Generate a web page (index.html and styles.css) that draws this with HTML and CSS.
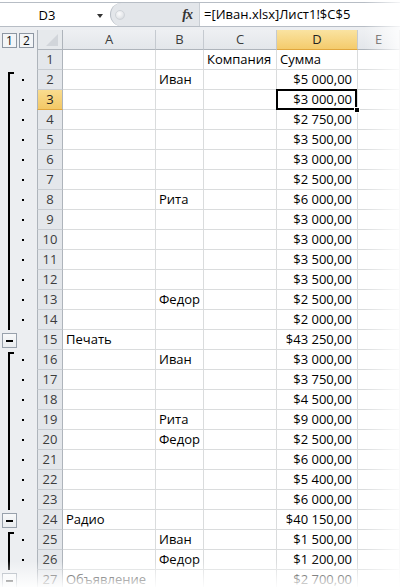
FILE: index.html
```html
<!DOCTYPE html>
<html lang="ru">
<head>
<meta charset="utf-8">
<title>Лист1</title>
<link rel="stylesheet" href="styles.css">
</head>
<body>
<div class="app">
  <div class="fbar">
    <div class="namebox"><span class="ref">D3</span><span class="arrow"></span></div>
    <div class="fx-area"><span class="grip"></span><span class="fx">fx</span></div>
    <div class="formula">=[Иван.xlsx]Лист1!$C$5</div>
  </div>
  <div class="gap"></div>

  <div class="sheet">
    <div class="row head">
      <div class="ol levels"><span class="lvl">1</span><span class="lvl">2</span></div>
      <div class="corner"><span class="tri"></span></div>
      <div class="ch">A</div>
      <div class="ch">B</div>
      <div class="ch">C</div>
      <div class="ch on">D</div>
      <div class="ch">E</div>
    </div>

    <div class="row"><div class="ol"></div><div class="rh">1</div><div class="c"></div><div class="c"></div><div class="c">Компания</div><div class="c">Сумма</div><div class="c"></div></div>
    <div class="row"><div class="ol s"><i class="bar"></i><i class="dot"></i></div><div class="rh">2</div><div class="c"></div><div class="c">Иван</div><div class="c"></div><div class="c num">$5 000,00</div><div class="c"></div></div>
    <div class="row"><div class="ol"><i class="bar"></i><i class="dot"></i></div><div class="rh on">3</div><div class="c"></div><div class="c"></div><div class="c"></div><div class="c num sel">$3 000,00<i class="handle"></i></div><div class="c"></div></div>
    <div class="row"><div class="ol"><i class="bar"></i><i class="dot"></i></div><div class="rh">4</div><div class="c"></div><div class="c"></div><div class="c"></div><div class="c num">$2 750,00</div><div class="c"></div></div>
    <div class="row"><div class="ol"><i class="bar"></i><i class="dot"></i></div><div class="rh">5</div><div class="c"></div><div class="c"></div><div class="c"></div><div class="c num">$3 500,00</div><div class="c"></div></div>
    <div class="row"><div class="ol"><i class="bar"></i><i class="dot"></i></div><div class="rh">6</div><div class="c"></div><div class="c"></div><div class="c"></div><div class="c num">$3 000,00</div><div class="c"></div></div>
    <div class="row"><div class="ol"><i class="bar"></i><i class="dot"></i></div><div class="rh">7</div><div class="c"></div><div class="c"></div><div class="c"></div><div class="c num">$2 500,00</div><div class="c"></div></div>
    <div class="row"><div class="ol"><i class="bar"></i><i class="dot"></i></div><div class="rh">8</div><div class="c"></div><div class="c">Рита</div><div class="c"></div><div class="c num">$6 000,00</div><div class="c"></div></div>
    <div class="row"><div class="ol"><i class="bar"></i><i class="dot"></i></div><div class="rh">9</div><div class="c"></div><div class="c"></div><div class="c"></div><div class="c num">$3 000,00</div><div class="c"></div></div>
    <div class="row"><div class="ol"><i class="bar"></i><i class="dot"></i></div><div class="rh">10</div><div class="c"></div><div class="c"></div><div class="c"></div><div class="c num">$3 000,00</div><div class="c"></div></div>
    <div class="row"><div class="ol"><i class="bar"></i><i class="dot"></i></div><div class="rh">11</div><div class="c"></div><div class="c"></div><div class="c"></div><div class="c num">$3 500,00</div><div class="c"></div></div>
    <div class="row"><div class="ol"><i class="bar"></i><i class="dot"></i></div><div class="rh">12</div><div class="c"></div><div class="c"></div><div class="c"></div><div class="c num">$3 500,00</div><div class="c"></div></div>
    <div class="row"><div class="ol"><i class="bar"></i><i class="dot"></i></div><div class="rh">13</div><div class="c"></div><div class="c">Федор</div><div class="c"></div><div class="c num">$2 500,00</div><div class="c"></div></div>
    <div class="row"><div class="ol"><i class="bar"></i><i class="dot"></i></div><div class="rh">14</div><div class="c"></div><div class="c"></div><div class="c"></div><div class="c num">$2 000,00</div><div class="c"></div></div>
    <div class="row"><div class="ol sum"><i class="minus"></i></div><div class="rh">15</div><div class="c">Печать</div><div class="c"></div><div class="c"></div><div class="c num">$43 250,00</div><div class="c"></div></div>
    <div class="row"><div class="ol s"><i class="bar"></i><i class="dot"></i></div><div class="rh">16</div><div class="c"></div><div class="c">Иван</div><div class="c"></div><div class="c num">$3 000,00</div><div class="c"></div></div>
    <div class="row"><div class="ol"><i class="bar"></i><i class="dot"></i></div><div class="rh">17</div><div class="c"></div><div class="c"></div><div class="c"></div><div class="c num">$3 750,00</div><div class="c"></div></div>
    <div class="row"><div class="ol"><i class="bar"></i><i class="dot"></i></div><div class="rh">18</div><div class="c"></div><div class="c"></div><div class="c"></div><div class="c num">$4 500,00</div><div class="c"></div></div>
    <div class="row"><div class="ol"><i class="bar"></i><i class="dot"></i></div><div class="rh">19</div><div class="c"></div><div class="c">Рита</div><div class="c"></div><div class="c num">$9 000,00</div><div class="c"></div></div>
    <div class="row"><div class="ol"><i class="bar"></i><i class="dot"></i></div><div class="rh">20</div><div class="c"></div><div class="c">Федор</div><div class="c"></div><div class="c num">$2 500,00</div><div class="c"></div></div>
    <div class="row"><div class="ol"><i class="bar"></i><i class="dot"></i></div><div class="rh">21</div><div class="c"></div><div class="c"></div><div class="c"></div><div class="c num">$6 000,00</div><div class="c"></div></div>
    <div class="row"><div class="ol"><i class="bar"></i><i class="dot"></i></div><div class="rh">22</div><div class="c"></div><div class="c"></div><div class="c"></div><div class="c num">$5 400,00</div><div class="c"></div></div>
    <div class="row"><div class="ol"><i class="bar"></i><i class="dot"></i></div><div class="rh">23</div><div class="c"></div><div class="c"></div><div class="c"></div><div class="c num">$6 000,00</div><div class="c"></div></div>
    <div class="row"><div class="ol sum"><i class="minus"></i></div><div class="rh">24</div><div class="c">Радио</div><div class="c"></div><div class="c"></div><div class="c num">$40 150,00</div><div class="c"></div></div>
    <div class="row"><div class="ol s"><i class="bar"></i><i class="dot"></i></div><div class="rh">25</div><div class="c"></div><div class="c">Иван</div><div class="c"></div><div class="c num">$1 500,00</div><div class="c"></div></div>
    <div class="row"><div class="ol"><i class="bar"></i><i class="dot"></i></div><div class="rh">26</div><div class="c"></div><div class="c">Федор</div><div class="c"></div><div class="c num">$1 200,00</div><div class="c"></div></div>
    <div class="row"><div class="ol sum"><i class="minus"></i></div><div class="rh">27</div><div class="c">Объявление</div><div class="c"></div><div class="c"></div><div class="c num">$2 700,00</div><div class="c"></div></div>
  </div>

  <div class="fade-r"></div>
  <div class="fade-b"></div>
</div>
</body>
</html>
```

FILE: styles.css
```css
* { box-sizing: border-box; margin: 0; padding: 0; }

html, body {
  width: 400px;
  height: 587px;
  overflow: hidden;
  background: #fff;
}

body {
  font-family: "Open Sans", "Noto Sans", sans-serif;
  font-size: 13px;
  color: #000;
}

.app {
  position: relative;
  width: 400px;
  height: 587px;
  overflow: hidden;
}

/* ---------- formula bar ---------- */
.fbar {
  margin-top: 2px;
  height: 25px;
  display: flex;
  border-top: 1px solid #b7bdc5;
  border-bottom: 1px solid #b7bdc5;
  background: #fff;
}

.namebox {
  width: 110px;
  display: flex;
  align-items: center;
}

.ref {
  width: 94px;
  text-align: center;
  font-size: 13px;
}

.arrow {
  margin-left: 3px;
  width: 0;
  height: 0;
  border-left: 3.5px solid transparent;
  border-right: 3.5px solid transparent;
  border-top: 4px solid #333;
  margin-top: 2px;
}

.fx-area {
  width: 89px;
  display: flex;
  align-items: center;
  background: #e3e6ea;
  border-left: 1px solid #b7bdc5;
  border-radius: 12px 0 0 12px;
}

.grip {
  margin-left: 4px;
  width: 10px;
  height: 10px;
  border-radius: 50%;
  background: radial-gradient(circle at 40% 35%, #fbfbfc 0, #e6e8eb 55%, #c8cdd3 100%);
  border: 1px solid #d0d4d9;
}

.fx {
  margin-left: auto;
  margin-right: 7px;
  font-family: "Liberation Serif", "DejaVu Serif", serif;
  font-style: italic;
  font-weight: bold;
  font-size: 14px;
  color: #333;
  letter-spacing: -1px;
}

.formula {
  flex: 1;
  padding-left: 4px;
  line-height: 23px;
  white-space: nowrap;
  border-left: 1px solid #c9ced4;
}

.gap {
  height: 3px;
  background: #eceef1;
}

/* ---------- grid ---------- */
.row {
  display: grid;
  grid-template-columns: 37px 26px 93px 48px 73px 81px 1fr;
  height: 20px;
}

.c {
  border-right: 1px solid #dadcdd;
  border-bottom: 1px solid #dadcdd;
  padding: 0 3px;
  line-height: 19px;
  white-space: nowrap;
  overflow: hidden;
}

.c.num {
  text-align: right;
  padding-right: 5px;
}

/* header row */
.head .ch {
  background: linear-gradient(#eef0f3, #e3e6ea);
  border-right: 1px solid #c5cad0;
  border-bottom: 1px solid #aeb4bb;
  text-align: center;
  line-height: 19px;
  color: #3c3c3c;
}

.head .ch.on {
  background: linear-gradient(#fae3a1, #f4cb6c);
  border-bottom-color: #e0a63d;
  color: #222;
}

.corner {
  background: #e6e9ec;
  border-left: 1px solid #aeb4bb;
  border-right: 1px solid #aeb4bb;
  border-bottom: 1px solid #aeb4bb;
  display: flex;
  justify-content: flex-end;
  align-items: flex-end;
  padding: 0 4px 3px 0;
}

.tri {
  width: 0;
  height: 0;
  border-left: 12px solid transparent;
  border-bottom: 12px solid #d1d5da;
}

/* row numbers */
.rh {
  background: #e4e7eb;
  border-left: 1px solid #aeb4bb;
  border-right: 1px solid #aeb4bb;
  border-bottom: 1px solid #c9cdd2;
  text-align: center;
  line-height: 19px;
  color: #3c3c3c;
}

.rh.on {
  background: linear-gradient(#f9dc8f, #f3c866);
  border-bottom-color: #e0a63d;
  color: #222;
}

/* ---------- outline gutter ---------- */
.ol {
  background: #eceef1;
  display: flex;
  align-items: stretch;
  padding-left: 8px;
}

.bar {
  width: 6px;
  border-left: 2px solid #000;
}

.ol.s .bar {
  border-top: 2px solid #000;
  margin-top: 2px;
}

.dot {
  width: 2px;
  height: 2px;
  background: #000;
  align-self: center;
  margin-left: 8px;
}

.ol.sum {
  padding: 3px 0 0 2px;
  align-items: flex-start;
}

.minus {
  width: 15px;
  height: 15px;
  border: 1px solid #98a1ac;
  background: linear-gradient(#f8f9fa, #e9ecef);
  display: flex;
  align-items: center;
  justify-content: center;
}

.minus::before {
  content: "";
  width: 7px;
  height: 2px;
  background: #000;
}

.ol.levels {
  padding: 3px 0 0 2px;
  align-items: flex-start;
  gap: 2px;
  border-bottom: 1px solid #eceef1;
}

.lvl {
  width: 15px;
  height: 15px;
  border: 1px solid #8d96a2;
  background: #f3f5f7;
  font-size: 12px;
  line-height: 13px;
  text-align: center;
  color: #111;
}

/* active cell */
.sel {
  position: relative;
  overflow: visible;
}

.sel::after {
  content: "";
  position: absolute;
  left: -1px;
  top: -1px;
  right: 0;
  bottom: -1px;
  border: 2px solid #000;
}

.handle {
  position: absolute;
  right: -3px;
  bottom: -4px;
  width: 6px;
  height: 6px;
  background: #000;
  border: 1px solid #fff;
  z-index: 2;
}

/* soft edges of the sheet */
.fade-r {
  position: absolute;
  top: 0;
  right: 0;
  width: 36px;
  height: 100%;
  background: linear-gradient(to right, rgba(255,255,255,0), rgba(255,255,255,0.85));
  z-index: 5;
}

.fade-b {
  position: absolute;
  left: 0;
  bottom: 0;
  width: 100%;
  height: 26px;
  background: linear-gradient(to bottom, rgba(255,255,255,0), rgba(255,255,255,0.92));
  z-index: 5;
}
```
